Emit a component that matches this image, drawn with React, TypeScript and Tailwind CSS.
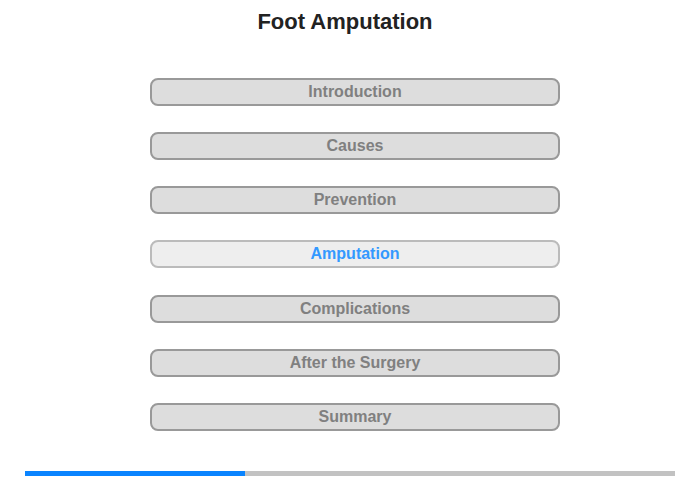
const sections = [
  'Introduction',
  'Causes',
  'Prevention',
  'Amputation',
  'Complications',
  'After the Surgery',
  'Summary',
];

const active = 'Amputation';

export default function App() {
  return (
    <div className="w-[700px] h-[480px] bg-white overflow-hidden" style={{ fontFamily: '"Liberation Sans", Arial, sans-serif' }}>
      {/* Title */}
      <div className="w-[690px] pt-[9px] h-[26px] box-content text-center text-[22px] leading-[26px] font-bold text-[#222222]">
        Foot Amputation
      </div>

      {/* Menu */}
      <div className="mt-[43px] ml-[150px] w-[410px] flex flex-col gap-[26px]">
        {sections.map((s, i) =>
          s === active ? (
            <div
              key={s}
              className="h-[28px] rounded-[8px] border-2 border-[#bbbbbb] bg-[#eeeeee] flex items-center justify-center text-[16px] font-bold text-[#3399ff]"
            >
              {s}
            </div>
          ) : (
            <div
              key={s}
              className={
                (i === 4 ? 'mt-[1px] ' : '') +
                'h-[28px] rounded-[8px] border-2 border-[#999999] bg-[#dddddd] flex items-center justify-center text-[16px] font-bold text-[#808080]'
              }
            >
              {s}
            </div>
          )
        )}
      </div>

      {/* Progress */}
      <div className="mt-[40px] ml-[25px] w-[650px] h-[5px] bg-[#c2c2c2] flex">
        <div className="h-full bg-[#0a84ff]" style={{ width: '220px' }} />
      </div>
    </div>
  );
}
